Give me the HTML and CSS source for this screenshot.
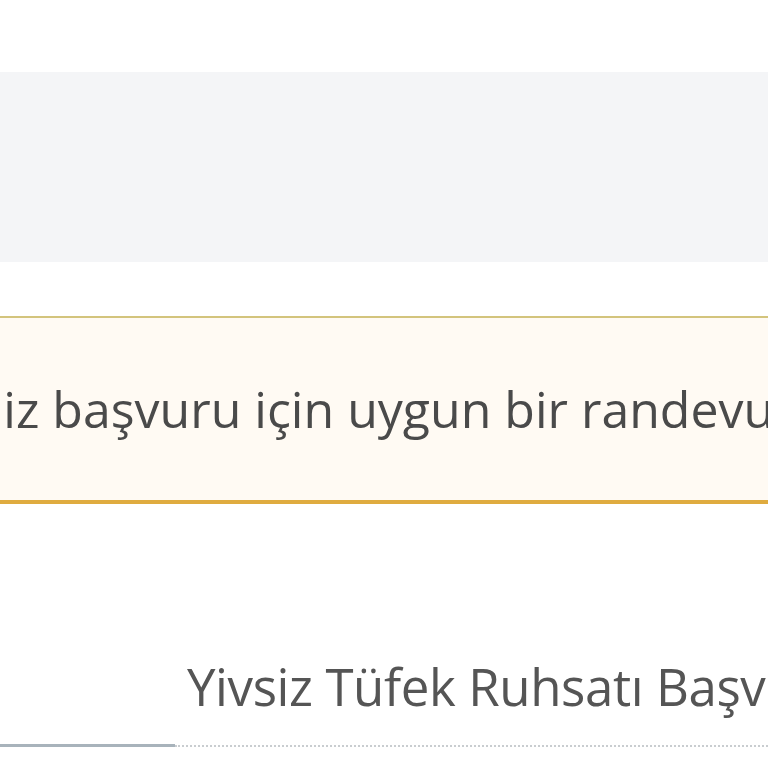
FILE: index.html
```html
<!DOCTYPE html>
<html lang="tr">
<head>
  <meta charset="UTF-8">
  <meta name="viewport" content="width=device-width, initial-scale=1.0">
  <title>Randevu</title>
  <link rel="stylesheet" href="styles.css">
</head>
<body>
    <div class="top-space"></div>
    <div class="gray-band"></div>

    <div class="alert">
        <p class="alert-text">Seçtiğiniz başvuru için uygun bir randevu tarihi bulunamadı.</p>
    </div>

    <div class="section">
        <h2 class="section-title">Yivsiz Tüfek Ruhsatı Başvurusu</h2>
        <div class="tabs">
            <div class="tab-active"></div>
            <div class="tab-rest"></div>
        </div>
    </div>
</body>
</html>
```

FILE: styles.css
```css
body {
    margin: 0;
    font-family: "Open Sans", Arial, sans-serif;
    background-color: #ffffff;
    overflow: hidden;
}

.top-space {
    height: 72px;
}

.gray-band {
    height: 190px;
    background-color: #f4f5f7;
}

.alert {
    margin-top: 54px;
    height: 182px;
    border-top: 2px solid #d3c47c;
    border-bottom: 4px solid #dfab3f;
    background-color: #fffaf3;
    display: flex;
    align-items: center;
    overflow: hidden;
}

.alert-text {
    margin: 0 0 0 -177px;
    white-space: nowrap;
    font-size: 50px;
    color: #4a4a4a;
}

.section {
    padding-top: 157px;
}

.section-title {
    margin: 0 0 0 187px;
    white-space: nowrap;
    font-size: 51px;
    font-weight: normal;
    letter-spacing: -0.4px;
    line-height: 1;
    color: #555555;
}

.tabs {
    display: flex;
    margin-top: 32px;
}

.tab-active {
    width: 175px;
    border-bottom: 3px solid #a8b3bb;
}

.tab-rest {
    flex: 1;
    border-bottom: 2px dotted #c9cdd0;
}
```
